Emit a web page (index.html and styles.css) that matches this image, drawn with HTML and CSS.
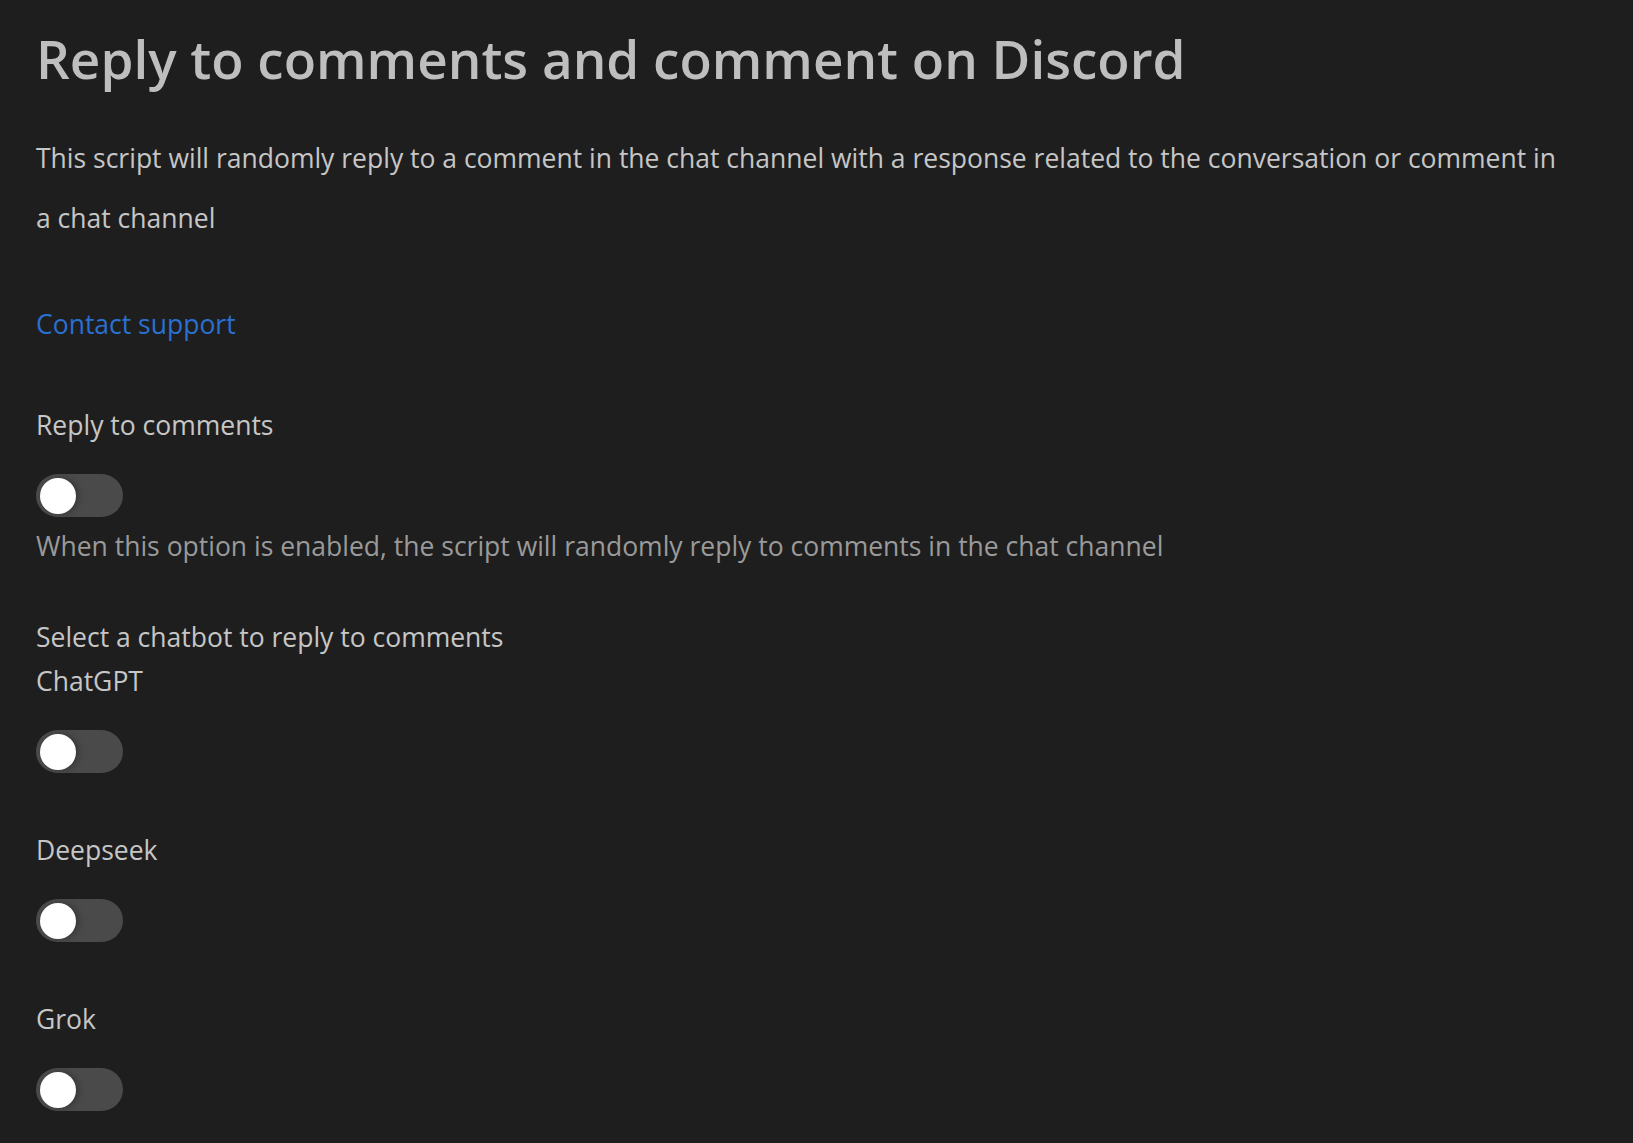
FILE: index.html
```html
<!DOCTYPE html>
<html lang="en">
<head>
<meta charset="utf-8">
<title>Reply to comments and comment on Discord</title>
<link rel="stylesheet" href="styles.css">
</head>
<body>
<main class="page">
  <h1 class="title">Reply to comments and comment on Discord</h1>
  <p class="desc">This script will randomly reply to a comment in the chat channel with a response related to the conversation or comment in a chat channel</p>
  <a class="support" href="#">Contact support</a>

  <section class="setting first">
    <div class="label">Reply to comments</div>
    <label class="toggle"><input type="checkbox"><span class="knob"></span></label>
    <div class="help">When this option is enabled, the script will randomly reply to comments in the chat channel</div>
  </section>

  <section class="setting group">
    <div class="label">Select a chatbot to reply to comments</div>
    <div class="option">
      <div class="label sub">ChatGPT</div>
      <label class="toggle"><input type="checkbox"><span class="knob"></span></label>
    </div>
    <div class="option">
      <div class="label sub">Deepseek</div>
      <label class="toggle"><input type="checkbox"><span class="knob"></span></label>
    </div>
    <div class="option">
      <div class="label sub">Grok</div>
      <label class="toggle"><input type="checkbox"><span class="knob"></span></label>
    </div>
  </section>
</main>
</body>
</html>
```

FILE: styles.css
```css
html, body {
  margin: 0;
  padding: 0;
  background: #1e1e1e;
}
body {
  font-family: "Open Sans", "Noto Sans", "Liberation Sans", sans-serif;
  color: #c6c6c6;
}
.page {
  padding: 24px 36px 0 36px;
  display: flex;
  flex-direction: column;
  align-items: flex-start;
}
.title {
  margin: 0;
  font-size: 53px;
  font-weight: 600;
  line-height: 70px;
  color: #bebebe;
}
.desc {
  margin: 34px 0 0 0;
  max-width: 1532px;
  font-size: 26.5px;
  line-height: 60px;
  color: #c6c6c6;
}
.support {
  margin-top: 58px;
  font-size: 26.5px;
  line-height: 36px;
  color: #2a70d0;
  text-decoration: none;
}
.setting { display: flex; flex-direction: column; align-items: flex-start; }
.first { margin-top: 65px; }
.label {
  font-size: 26.5px;
  line-height: 36px;
  color: #c6c6c6;
}
.toggle {
  position: relative;
  display: block;
  width: 87px;
  height: 43px;
  border-radius: 22px;
  background: #4a4a4a;
  margin-top: 31px;
  cursor: pointer;
}
.toggle input { display: none; }
.knob {
  position: absolute;
  left: 4px;
  top: 3.5px;
  width: 36px;
  height: 36px;
  border-radius: 50%;
  background: #ffffff;
  box-shadow: 3px 0 6px rgba(0,0,0,0.25);
}
.help {
  margin-top: 11px;
  font-size: 26.5px;
  line-height: 36px;
  color: #9a9a9a;
}
.group { margin-top: 55px; }
.option { display: flex; flex-direction: column; align-items: flex-start; }
.option + .option { margin-top: 51px; }
.sub { margin-top: 8px; }
```
